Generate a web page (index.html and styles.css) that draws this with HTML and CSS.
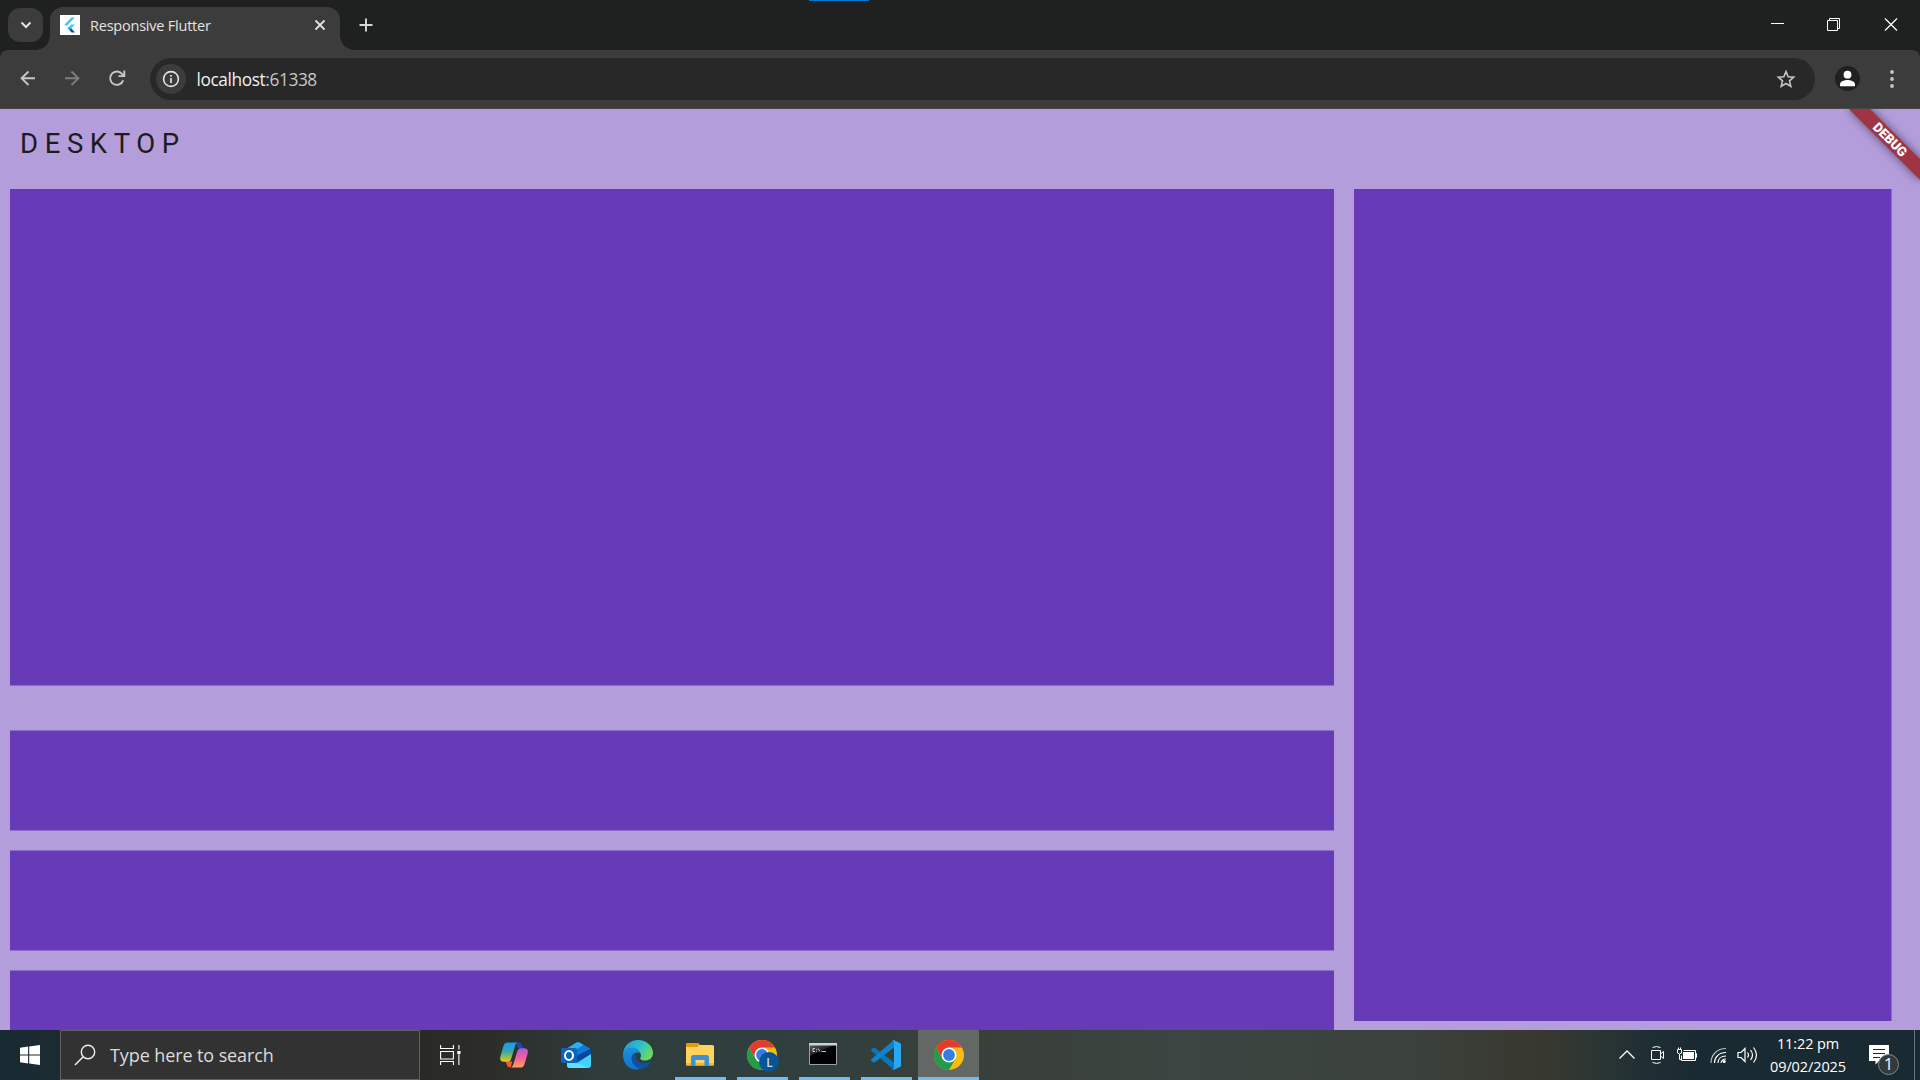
FILE: index.html
```html
<!DOCTYPE html>
<html lang="en">
<head>
<meta charset="utf-8">
<title>Responsive Flutter</title>
<link rel="stylesheet" href="styles.css">
</head>
<body>
<div class="screen">
  <header class="tabstrip">
    <button class="tab-search" aria-label="Search tabs">
      <svg width="12" height="8" viewBox="0 0 12 8"><path d="M1.5 1.5 6 6l4.5-4.5" fill="none" stroke="#e3e3e3" stroke-width="2"/></svg>
    </button>
    <div class="tab">
      <svg class="favicon" width="20" height="20" viewBox="0 0 20 20"><rect width="20" height="20" fill="#fff"/><path d="M11.4 2.5h3.6L6.4 11.3 4.5 9.4z" fill="#47c5fb"/><path d="M11.4 9.5H15l-3.7 3.8-1.9-1.9z" fill="#47c5fb"/><path d="M7.5 13.3l1.9-1.9 1.9 1.9-1.9 1.9z" fill="#00b5f8"/><path d="M9.4 15.2l1.9-1.9L15 17.4h-3.4z" fill="#00569e"/></svg>
      <span class="tab-title">Responsive Flutter</span>
      <svg class="tab-close" width="12" height="12" viewBox="0 0 12 12"><path d="M1.5 1.5l9 9M10.5 1.5l-9 9" stroke="#e3e3e3" stroke-width="1.8"/></svg>
    </div>
    <svg class="new-tab" width="14" height="14" viewBox="0 0 14 14"><path d="M7 .5v13M.5 7h13" stroke="#d8d8d8" stroke-width="1.9"/></svg>
    <div class="window-controls">
      <svg width="58" height="50" viewBox="0 0 58 50"><path d="M24 23.5h13" stroke="#fff"/></svg>
      <svg width="57" height="50" viewBox="0 0 57 50"><path d="M22.5 20.5h10v10h-10zM24.500 20v-1.500h10v10H33" fill="none" stroke="#fff"/></svg>
      <svg width="58" height="50" viewBox="0 0 58 50"><path d="M23 18.500l12 12M35 18.500l-12 12" stroke="#fff" stroke-width="1.2"/></svg>
    </div>
    <span class="capture-bar"></span>
  </header>

  <nav class="toolbar">
    <svg class="nav-icon" width="45" height="40" viewBox="0 0 45 40"><path d="M30 20.200H17M23.500 13.500 16.600 20.200l6.900 6.800" fill="none" stroke="#c7c7c7" stroke-width="1.9"/></svg>
    <svg class="nav-icon" width="45" height="40" viewBox="0 0 45 40"><path d="M15 20.200h13M21.500 13.500l6.900 6.700-6.900 6.800" fill="none" stroke="#7d7d7d" stroke-width="1.9"/></svg>
    <svg class="nav-icon" width="55" height="40" viewBox="-1 0 55 40"><path d="M27.200 22.400A6.700 6.700 0 1 1 26 15.800l1.300 1.700M28.300 12.500v5.600h-5.800" fill="none" stroke="#c7c7c7" stroke-width="1.9"/></svg>
    <div class="omnibox">
      <span class="site-info"><svg width="18" height="18" viewBox="0 0 18 18"><circle cx="9" cy="9" r="7.400" fill="none" stroke="#e3e3e3" stroke-width="1.600"/><path d="M9 8v5M9 5v1.800" stroke="#e3e3e3" stroke-width="1.700"/></svg></span>
      <span class="url"><b>localhost</b>:61338</span>
      <svg class="star" width="20" height="20" viewBox="0 0 20 20"><path d="M10 2.600l2.200 5.100 5.500.5-4.200 3.700 1.300 5.500-4.800-2.900-4.800 2.900 1.300-5.500L2.300 8.200l5.500-.5z" fill="none" stroke="#c7c7c7" stroke-width="1.600"/></svg>
    </div>
    <span class="profile"><svg width="25" height="25" viewBox="0 0 25 25"><circle cx="12.500" cy="8.700" r="3.900" fill="#fff"/><path d="M5 20.300v-2c0-3.200 5-4.400 7.500-4.400s7.500 1.200 7.500 4.400v2z" fill="#fff"/></svg></span>
    <svg class="menu" width="6" height="20" viewBox="0 0 6 20"><g fill="#c7c7c7"><circle cx="3" cy="3" r="1.900"/><circle cx="3" cy="10" r="1.900"/><circle cx="3" cy="17" r="1.900"/></g></svg>
  </nav>

  <main class="app">
    <h1 class="app-title">DESKTOP</h1>
    <div class="app-body">
      <div class="primary">
        <div class="video"></div>
        <div class="list">
          <div class="item"></div>
          <div class="item"></div>
          <div class="item"></div>
        </div>
      </div>
      <aside class="side"></aside>
    </div>
    <div class="banner">DEBUG</div>
  </main>

  <footer class="taskbar">
    <span class="start"><svg width="20" height="20" viewBox="0 0 20 20" fill="#fff"><path d="M0 2.700 8.100 1.600V9.400H0zM9.200 1.400 20 0v9.400H9.200zM0 10.500h8.100v7.900L0 17.300zM9.200 10.500H20V20L9.200 18.500z"/></svg></span>
    <div class="search">
      <svg width="22" height="22" viewBox="0 0 22 22"><circle cx="14" cy="8" r="6.700" fill="none" stroke="#eee" stroke-width="1.400"/><path d="M9.200 12.700 1 21" stroke="#eee" stroke-width="1.500"/></svg>
      <span>Type here to search</span>
    </div>
    <span class="task-view"><svg width="21" height="20" viewBox="0 0 21 20"><path d="M.6 0v3.500h12.800V0M.6 6.500h12.800v7.500H.6zM.6 20v-3.500h12.800V20M18.900 0v4.500M18.900 9.500V20" fill="none" stroke="#fff" stroke-width="1.100"/><path d="M17.300 6h3.200v3.200h-3.200z" fill="#fff"/></svg></span>
    <div class="apps">
      <span class="app-slot">
        <svg width="30" height="30" viewBox="0 0 30 30">
          <defs>
            <linearGradient id="cp1" x1="0" y1="0" x2="0" y2="1"><stop offset="0" stop-color="#159bf0"/><stop offset=".45" stop-color="#35a7b0"/><stop offset=".75" stop-color="#8fbf4b"/><stop offset="1" stop-color="#f5c416"/></linearGradient>
            <linearGradient id="cp2" x1="0" y1="0" x2="0" y2="1"><stop offset="0" stop-color="#a85be0"/><stop offset=".5" stop-color="#f0609a"/><stop offset="1" stop-color="#ffa05c"/></linearGradient>
          </defs>
          <path d="M17 2.600h3c2 0 2.600 1.200 3.200 3.100l.8 2.600h-5z" fill="#1547bd"/>
          <path d="M6.500 21.500h6.800l-1.500 5.700h-1c-2 0-2.600-1.200-3.100-3z" fill="#f05a34"/>
          <path d="M8.500 2.600h10.200c-1.500.5-2.200 2-2.800 4l-3.400 11.200c-.8 2.800-1.700 4-3.700 4H4.700C1.200 21.800.6 19 1.500 16L4.300 6.500c.8-2.500 1.700-3.900 4.200-3.900z" fill="url(#cp1)"/>
          <path d="M22 27.400H11.800c1.500-.5 2.200-2 2.800-4L18 12.300c.8-2.800 1.700-4 3.700-4h3.600c3.500 0 4.100 2.800 3.200 5.800l-2.800 9.400c-.8 2.500-1.700 3.900-3.700 3.900z" fill="url(#cp2)"/>
        </svg>
      </span>
      <span class="app-slot">
        <svg width="30" height="30" viewBox="0 0 30 30">
          <path d="M5 9 15.500 2.600q1.500-.9 3 0L29 8.500q1 .6 1 2V25a3 3 0 0 1-3 3H9a3 3 0 0 1-3-3z" fill="#0f7bd6"/>
          <path d="M6 8.500 15.500 2.600q1.500-.9 3 0l4 2.200L11 12.500z" fill="#2fb0ec"/>
          <path d="M13 17 30 8.500V15L16 24z" fill="#08489c"/>
          <path d="M14 24 30 14v11a3 3 0 0 1-3 3H9a3 3 0 0 1-3-3v-2z" fill="#45d0f6"/>
          <path d="M6 22l10 1 11 5H9a3 3 0 0 1-3-3z" fill="#5fe0fb"/>
          <rect y="8" width="16" height="15" rx="1.500" fill="#0a63c0"/><ellipse cx="8" cy="15.500" rx="4" ry="4.400" fill="none" stroke="#fff" stroke-width="2"/>
        </svg>
      </span>
      <span class="app-slot">
        <svg width="30" height="30" viewBox="0 0 30 30">
          <defs><linearGradient id="eg1" x1="0" y1=".2" x2="1" y2=".7"><stop offset="0" stop-color="#1f9fd8"/><stop offset=".5" stop-color="#30bfca"/><stop offset="1" stop-color="#6ee052"/></linearGradient>
          <linearGradient id="eg2" x1="0" y1="0" x2="0" y2="1"><stop offset="0" stop-color="#1b91d8"/><stop offset="1" stop-color="#1173ca"/></linearGradient></defs>
          <path d="M0 14C1 5.500 7 0 15 0c8.500 0 15 6 15 13 0 5-4 7.500-8 7.500-4 0-5.500-1.600-4.500-3 1-1.600.8-5-3-6.500C8.500 8.500 2 9.500 0 14z" fill="url(#eg1)"/>
          <path d="M0 15c0-5 4-7.500 8.500-7.500 4.500 0 8 2 9 5.500-3-1.500-7.500 0-8.500 4-1 5 3 10.500 9 11.500-9 4-18-3-18-13.500z" fill="url(#eg2)"/>
          <path d="M11 13c-5 4-2 14 7 16.200 4.500-1 8-3.200 10-7 .5-1-.3-1.300-1-.8-7 3.500-14.500.5-14.200-5.400z" fill="#0d519f"/>
        </svg>
      </span>
      <span class="app-slot open">
        <svg width="30" height="30" viewBox="0 0 30 30">
          <path d="M1 4.500A1.500 1.500 0 0 1 2.500 3H13l2 2h12.500A1.500 1.500 0 0 1 29 6.500V24.500A1 1 0 0 1 28 25.500H2a1 1 0 0 1-1-1z" fill="#ffd35c"/>
          <path d="M1 4.500A1.500 1.500 0 0 1 2.500 3H13l1.500 1.500L12.500 7H1z" fill="#e19b05"/><path d="M1 23h28v2.500H1z" fill="#efb52c"/>
          <path d="M6 26V17.500A2.500 2.500 0 0 1 8.500 15h13a2.500 2.500 0 0 1 2.500 2.500V26h-4.500v-6h-9v6z" fill="#3a91d9"/>
        </svg>
      </span>
      <span class="app-slot open">
        <svg class="profile-app" width="34" height="30" viewBox="0 0 34 30">
          <circle cx="16" cy="15" r="15" fill="#f9bb0d"/><path d="M3 7.500A15 15 0 0 1 29 7.500H16L9.500 18.700z" fill="#e33b2e"/><path d="M3 7.500A15 15 0 0 0 16 30L22.500 18.700h-13z" fill="#249a4b"/><circle cx="16" cy="15" r="7.500" fill="#fff"/><circle cx="16" cy="15" r="5.900" fill="#347de9"/>
          <circle cx="23" cy="22" r="10" fill="#075595"/><text x="20.200" y="26.500" class="badge-letter">L</text>
        </svg>
      </span>
      <span class="app-slot open">
        <svg class="terminal" width="30" height="30" viewBox="0 0 30 30">
          <defs><linearGradient id="cm" x1="0" y1="0" x2=".35" y2=".6"><stop offset="0" stop-color="#666"/><stop offset=".75" stop-color="#222"/><stop offset=".76" stop-color="#000"/></linearGradient></defs>
          <path d="M1.500 3.500h27v21h-27z" fill="url(#cm)" stroke="#98a0a4"/><path d="M1 3h28v2.500H1z" fill="#cbd3d8"/>
          <path d="M7 8.500H5v3h2M8.500 9v.8M8.500 10.800v.8M10 8.500l2 3M13.500 11.500H18" stroke="#ccc" fill="none"/>
        </svg>
      </span>
      <span class="app-slot open">
        <svg width="30" height="30" viewBox="0 0 30 30"><path d="M.5 9.200 2.200 7.700q.8-.6 1.600 0L23 22.500V30L.5 11q-.8-.9 0-1.800z" fill="#0877bd"/><path d="M.5 20.800l1.700 1.500q.8.600 1.600 0L23 7.500V0L.5 19q-.8.900 0 1.800z" fill="#1183cb"/><path d="M22.500 0 29 3q1 .5 1 1.600v20.800q0 1.100-1 1.600l-6.500 3q-.8.200-1.500-.5 2 .5 2-1.500V2q0-2-2-1.500.7-.7 1.500-.5z" fill="#27a8f2"/></svg>
      </span>
      <span class="app-slot open active">
        <svg width="30" height="30" viewBox="0 0 30 30"><circle cx="15" cy="15" r="15" fill="#f9bb0d"/><path d="M2 7.500A15 15 0 0 1 28 7.500H15L8.500 18.700z" fill="#e33b2e"/><path d="M2 7.500A15 15 0 0 0 15 30l6.500-11.300h-13z" fill="#249a4b"/><circle cx="15" cy="15" r="7.500" fill="#fff"/><circle cx="15" cy="15" r="5.900" fill="#347de9"/></svg>
      </span>
    </div>
    <div class="tray">
      <svg width="16" height="20" viewBox="0 0 16 20"><path d="M.5 13.500 8 6l7.500 7.500" fill="none" stroke="#fff" stroke-width="1.300"/></svg>
      <svg width="16" height="20" viewBox="0 0 16 20"><path d="M1.500 5.500h9v9h-9zM10.500 9l3-2.500v7L10.500 11M2.500 2.500Q6.500 .6 10.500 2.500M2.500 17.500Q6.500 19.400 10.500 17.500" fill="none" stroke="#fff"/></svg>
      <svg width="20" height="20" viewBox="0 0 20 20"><path d="M.5 4.500h4V8l-2 1-2-1zM1.500 4.500V2.500M3.500 4.500V2.500M2.500 9v5.500h2.500" fill="none" stroke="#fff"/><path d="M6.500 5.500H18.500v10H4.500v-5M18.500 8.500h1v4h-1" fill="none" stroke="#fff"/><path d="M6 7h11v7H6z" fill="#fff"/></svg>
      <svg width="17" height="20" viewBox="0 0 17 20"><g fill="none" stroke="#fff" stroke-width="1.100"><path d="M1 18C1 10 7 3.500 16 3.500" opacity=".7"/><path d="M4.500 18C4.500 12 9 7.500 16 7.500M8 18c0-4 3-7 8-7M11 18c0-2 2-4 5-4"/></g><circle cx="14.200" cy="16.500" r="1.600" fill="#fff"/></svg>
      <svg width="21" height="20" viewBox="0 0 21 20"><path d="M1 7.500h3L8 3.500v13L4 12.500H1zM10.500 7.500q2 2.500 0 5M13.500 5q4 5 0 10M16.500 2.500q6 7.500 0 15" fill="none" stroke="#fff" stroke-width="1.200"/></svg>
    </div>
    <div class="clock"><span>11:22 pm</span><span class="date">09/02/2025</span></div>
    <div class="action-center">
      <svg width="20" height="20" viewBox="0 0 20 20"><path d="M0 0h20v16H10l-3.500 3.500V16H0z" fill="#fff"/><path d="M4 4.500h12M4 8.500h12M4 12.500h7" stroke="#1c2a32" stroke-width="1.100"/></svg>
      <span class="count">1</span>
    </div>
    <span class="show-desktop"></span>
  </footer>
</div>
</body>
</html>
```
FILE: styles.css
```css
* { box-sizing: border-box; }
body { margin: 0; background: #b39ddb; font-family: "Open Sans", "Noto Sans", sans-serif; }
svg { display: block; flex: none; }
.screen { width: 1920px; height: 1080px; display: flex; flex-direction: column; overflow: hidden; }

/* Tab strip */
.tabstrip { position: relative; z-index: 1; height: 50px; flex: none; display: flex; background: #1f2120; padding-left: 8px; }
.tab-search { width: 35px; height: 34px; margin: 8px 7px 0 0; padding: 0; border: 0; border-radius: 12px; background: #3c3c3c; display: flex; align-items: center; justify-content: center; }
.tab { position: relative; width: 290px; height: 43px; margin-top: 7px; padding: 0 14px 7px 10px; border-radius: 13px 13px 0 0; background: #3c3c3c; display: flex; align-items: center; }
.tab::before, .tab::after { content: ""; position: absolute; bottom: 0; width: 14px; height: 14px; }
.tab::before { left: -14px; background: radial-gradient(circle at 0 0, transparent 13.500px, #3c3c3c 14px); }
.tab::after { right: -14px; background: radial-gradient(circle at 100% 0, transparent 13.500px, #3c3c3c 14px); }
.tab-title { flex: 1; margin-left: 10px; font-size: 14.500px; letter-spacing: -0.220px; color: #e3e3e3; white-space: nowrap; }
.new-tab { margin: 18px 0 0 19px; }
.window-controls { display: flex; margin-left: auto; }
.capture-bar { position: absolute; left: 809px; top: 0; width: 60px; height: 1px; background: #0078d7; }

/* Toolbar */
.toolbar { height: 59px; flex: none; display: flex; align-items: center; padding: 0 25px 1px 5px; background: #3c3c3c; border-bottom: 1px solid #474747; border-radius: 8px 8px 0 0; box-shadow: 0 -8px 0 0 #1f2120; }
.nav-icon { margin-top: -1px; }
.omnibox { width: 1665px; height: 42px; margin-top: 1px; border-radius: 21px; background: #282828; display: flex; align-items: center; padding: 0 19px 0 6px; }
.site-info { width: 30px; height: 30px; border-radius: 50%; background: #3c3c3c; display: flex; align-items: center; justify-content: center; }
.url { flex: 1; margin: 1px 0 0 10.500px; font-size: 17.300px; letter-spacing: -0.400px; color: #c7c7c7; }
.url b { font-weight: 400; color: #f0f0f0; }
.profile { width: 25px; height: 25px; margin-left: 20px; border-radius: 50%; background: #1f2120; }
.menu { margin-left: auto; }

/* App */
.app { position: relative; flex: 1; min-height: 0; overflow: hidden; background: #b39ddb; }
.app-title { margin: 0; height: 70px; padding-left: 20px; font: 400 27.500px/70px Roboto, sans-serif; letter-spacing: 6.600px; color: #1d1b20; }
.app-body { display: flex; gap: 20px; padding: 10px 28px 0 10px; }
.primary { width: 1324px; }
.video { height: 497px; background: #673ab7; border-bottom: 1px solid #8d6cc9; }
.list { display: flex; flex-direction: column; gap: 19px; padding-top: 44px; }
.item { height: 101px; background: #673ab7; border: solid #8d6cc9; border-width: 1px 0; }
.side { flex: 1; height: 832px; background: #673ab7; border-right: 1px solid #8d6cc9; }
.banner { position: absolute; right: -20px; top: 22.500px; width: 100px; height: 15px; transform: rotate(45deg); background: #9f3542; box-shadow: 0 0 10px rgba(0, 0, 0, 0.500); color: #fff; font: 900 13.200px/15px Roboto, sans-serif; letter-spacing: -0.100px; text-align: center; }

/* Taskbar */
.taskbar { height: 50px; flex: none; display: flex; background: linear-gradient(90deg, #182a33 0, #1d2b31 60px, #292a26 420px, #2c2d28 490px, #2f3c3b 600px, #2f3f3f 780px, #393f39 980px, #3c4541 1180px, #3b423d 1400px, #38382f 1540px, #2d3733 1590px, #1f2e33 1650px, #1a2a32 1700px, #192a32 1920px); }
.start { width: 60px; display: flex; align-items: center; justify-content: center; }
.search { width: 360px; border: 1px solid #606060; background: #323232; display: flex; align-items: center; padding-left: 13px; font-size: 18px; color: #dcdcdc; letter-spacing: -0.100px; }
.search span { margin-left: 14px; }
.task-view { width: 63px; padding: 15px 0 0 20px; }
.apps { display: flex; }
.app-slot { width: 62px; display: flex; align-items: center; justify-content: center; }
.open { background: linear-gradient(#76b9ed, #76b9ed) 6px 47px / 51px 3px no-repeat; }
.active { background: linear-gradient(#76b9ed, #76b9ed) 0 47px / 61px 3px no-repeat, #646864; width: 61px; margin-left: 1px; }
.profile-app { margin-left: 2px; overflow: visible; }
.terminal { margin-right: 2px; }
.badge-letter { font: 600 12px "Open Sans", sans-serif; fill: #c9dbea; }
.tray { margin-left: auto; display: flex; align-items: center; }
.tray svg:nth-child(1) { margin-right: 15px; }
.tray svg:nth-child(2) { margin-right: 11px; }
.tray svg:nth-child(3) { margin-right: 13px; }
.tray svg:nth-child(4) { margin-right: 10px; }
.tray svg:nth-child(5) { margin-right: 12px; }
.clock { width: 76px; display: flex; flex-direction: column; align-items: center; padding-top: 3px; font-size: 14.500px; line-height: 22.500px; letter-spacing: -0.100px; color: #fff; white-space: nowrap; }
.action-center { position: relative; width: 68px; padding: 15px 0 0 23px; }
.count { position: absolute; left: 32px; top: 24px; width: 21px; height: 21px; border: 1px solid #888; border-radius: 50%; background: #333a3d; color: #fff; font-size: 16px; line-height: 19px; text-align: center; }
.show-desktop { width: 6px; border-left: 1px solid #69747a; }
```
